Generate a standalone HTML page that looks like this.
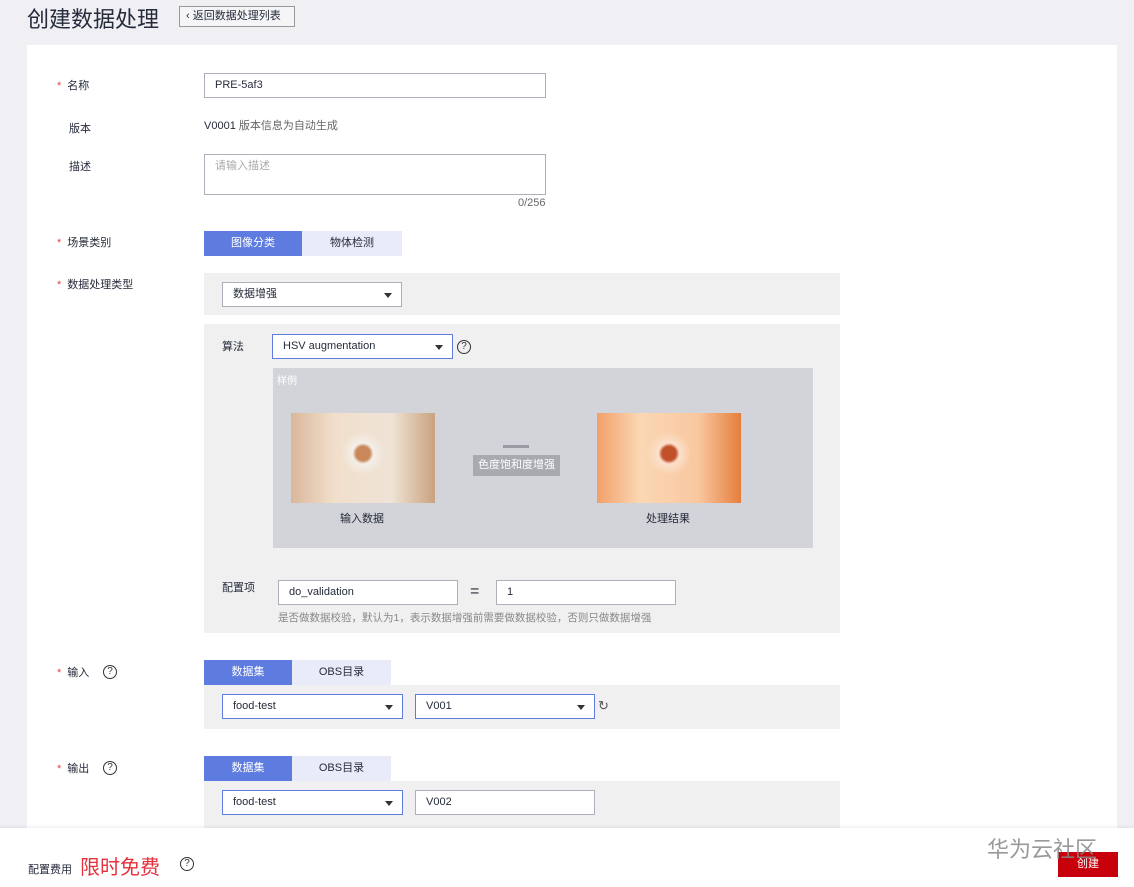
<!DOCTYPE html>
<html><head><meta charset="utf-8"><style>
*{box-sizing:border-box;margin:0;padding:0}
body{width:1134px;height:887px;background:#efeff4;font-family:"Liberation Sans","Noto Sans CJK SC",sans-serif;font-size:12px;color:#252b3a;position:relative;overflow:hidden}
.a{position:absolute}
.panel{left:27px;top:45px;width:1090px;height:800px;background:#fff}
.lbl{font-size:11px;color:#252b3a}
.req::before{content:"*";color:#e54545;margin-right:6px}
.inp{background:#fff;border:1px solid #adb0b8;height:25px;padding:0 10px;line-height:23px;font-size:11px}
.sel{border-color:#5e7ce0}
.tri{position:absolute;right:9px;top:10px;border-left:4px solid transparent;border-right:4px solid transparent;border-top:5px solid #333}
.tab{height:25px;line-height:25px;text-align:center;font-size:11px}
.on{background:#5e7ce0;color:#fff}.off{background:#e9ecf8;color:#252b3a}
.gray{background:#f0f0f0}
.q{width:14px;height:14px;border:1px solid #333;border-radius:50%;font-size:10px;line-height:12px;text-align:center;color:#333}
</style></head><body>
<div class="a" style="left:27px;top:2px;font-size:22px;color:#252b3a">创建数据处理</div>
<div class="a" style="left:179px;top:6px;width:116px;height:21px;border:1px solid #999;background:#f5f5f7;font-size:11px;line-height:19px;padding-left:6px">‹ 返回数据处理列表</div>
<div class="a panel"></div>

<div class="a lbl req" style="left:57px;top:77px">名称</div>
<div class="a inp" style="left:204px;top:73px;width:342px">PRE-5af3</div>
<div class="a lbl" style="left:69px;top:120px">版本</div>
<div class="a" style="left:204px;top:117px;font-size:11px">V0001 <span style="color:#666">版本信息为自动生成</span></div>
<div class="a lbl" style="left:69px;top:158px">描述</div>
<div class="a inp" style="left:204px;top:154px;width:342px;height:41px;color:#aaa">请输入描述</div>
<div class="a" style="left:518px;top:197px;font-size:11px;color:#666">0/256</div>

<div class="a lbl req" style="left:57px;top:234px">场景类别</div>
<div class="a tab on" style="left:204px;top:231px;width:98px">图像分类</div>
<div class="a tab off" style="left:302px;top:231px;width:100px">物体检测</div>

<div class="a lbl req" style="left:57px;top:276px">数据处理类型</div>
<div class="a gray" style="left:204px;top:273px;width:636px;height:42px"></div>
<div class="a inp" style="left:222px;top:282px;width:180px">数据增强<span class="tri"></span></div>
<div class="a gray" style="left:204px;top:324px;width:636px;height:309px"></div>
<div class="a lbl" style="left:222px;top:338px">算法</div>
<div class="a inp sel" style="left:272px;top:334px;width:181px">HSV augmentation<span class="tri"></span></div>
<div class="a q" style="left:457px;top:340px">?</div>
<div class="a" style="left:273px;top:368px;width:540px;height:180px;background:#d2d4d9"></div>
<div class="a" style="left:277px;top:372px;font-size:10px;color:#fff">样例</div>
<div class="a" style="left:291px;top:413px;width:144px;height:90px;background:radial-gradient(circle at 50% 45%,#c9875a 0 8%,#f4efe9 12%,transparent 25%),linear-gradient(90deg,#d9b79a,#f1dfcb 30%,#efe3d6 70%,#c9a27e),linear-gradient(#f0e2d4,#b08062)"></div>
<div class="a" style="left:597px;top:413px;width:144px;height:90px;background:radial-gradient(circle at 50% 45%,#c2502a 0 8%,#fbe1cc 12%,transparent 25%),linear-gradient(90deg,#f1a06a,#fbd7b4 30%,#f9c8a0 70%,#e67e3c),linear-gradient(#fbd0a8,#d86a2a)"></div>
<div class="a" style="left:503px;top:445px;width:26px;height:3px;background:#9a9ca3"></div>
<div class="a" style="left:473px;top:455px;width:87px;height:21px;background:#a8aab0;color:#fff;font-size:11px;line-height:21px;text-align:center">色度饱和度增强</div>
<div class="a" style="left:340px;top:510px;font-size:11px">输入数据</div>
<div class="a" style="left:646px;top:510px;font-size:11px">处理结果</div>
<div class="a lbl" style="left:222px;top:579px">配置项</div>
<div class="a inp" style="left:278px;top:580px;width:180px;height:25px">do_validation</div>
<div class="a" style="left:470px;top:583px;font-size:16px">=</div>
<div class="a inp" style="left:496px;top:580px;width:180px">1</div>
<div class="a" style="left:278px;top:610px;font-size:10.5px;color:#888;font-family:'Liberation Sans','Noto Sans CJK SC',sans-serif">是否做数据校验，默认为1，表示数据增强前需要做数据校验，否则只做数据增强</div>

<div class="a lbl req" style="left:57px;top:664px">输入</div>
<div class="a q" style="left:103px;top:665px">?</div>
<div class="a tab on" style="left:204px;top:660px;width:88px">数据集</div>
<div class="a tab off" style="left:292px;top:660px;width:99px">OBS目录</div>
<div class="a gray" style="left:204px;top:685px;width:636px;height:44px"></div>
<div class="a inp sel" style="left:222px;top:694px;width:181px">food-test<span class="tri"></span></div>
<div class="a inp sel" style="left:415px;top:694px;width:180px">V001<span class="tri"></span></div>
<div class="a" style="left:598px;top:698px;font-size:13px;color:#555">↻</div>

<div class="a lbl req" style="left:57px;top:760px">输出</div>
<div class="a q" style="left:103px;top:761px">?</div>
<div class="a tab on" style="left:204px;top:756px;width:88px">数据集</div>
<div class="a tab off" style="left:292px;top:756px;width:99px">OBS目录</div>
<div class="a gray" style="left:204px;top:781px;width:636px;height:47px"></div>
<div class="a inp sel" style="left:222px;top:790px;width:181px">food-test<span class="tri"></span></div>
<div class="a inp" style="left:415px;top:790px;width:180px">V002</div>

<div class="a" style="left:0;top:828px;width:1134px;height:59px;background:#fff;box-shadow:0 -1px 3px rgba(0,0,0,.08)"></div>
<div class="a" style="left:28px;top:861px;font-size:11px">配置费用</div>
<div class="a" style="left:80px;top:851px;font-size:20px;color:#e5303d">限时免费</div>
<div class="a q" style="left:180px;top:857px">?</div>
<div class="a" style="left:1058px;top:852px;width:60px;height:25px;background:#c7000b;color:#fff;font-size:11px;line-height:25px;text-align:center">创建</div>
<div class="a" style="left:987px;top:832px;font-size:22px;color:#888;opacity:.85">华为云社区</div>
</body></html>
